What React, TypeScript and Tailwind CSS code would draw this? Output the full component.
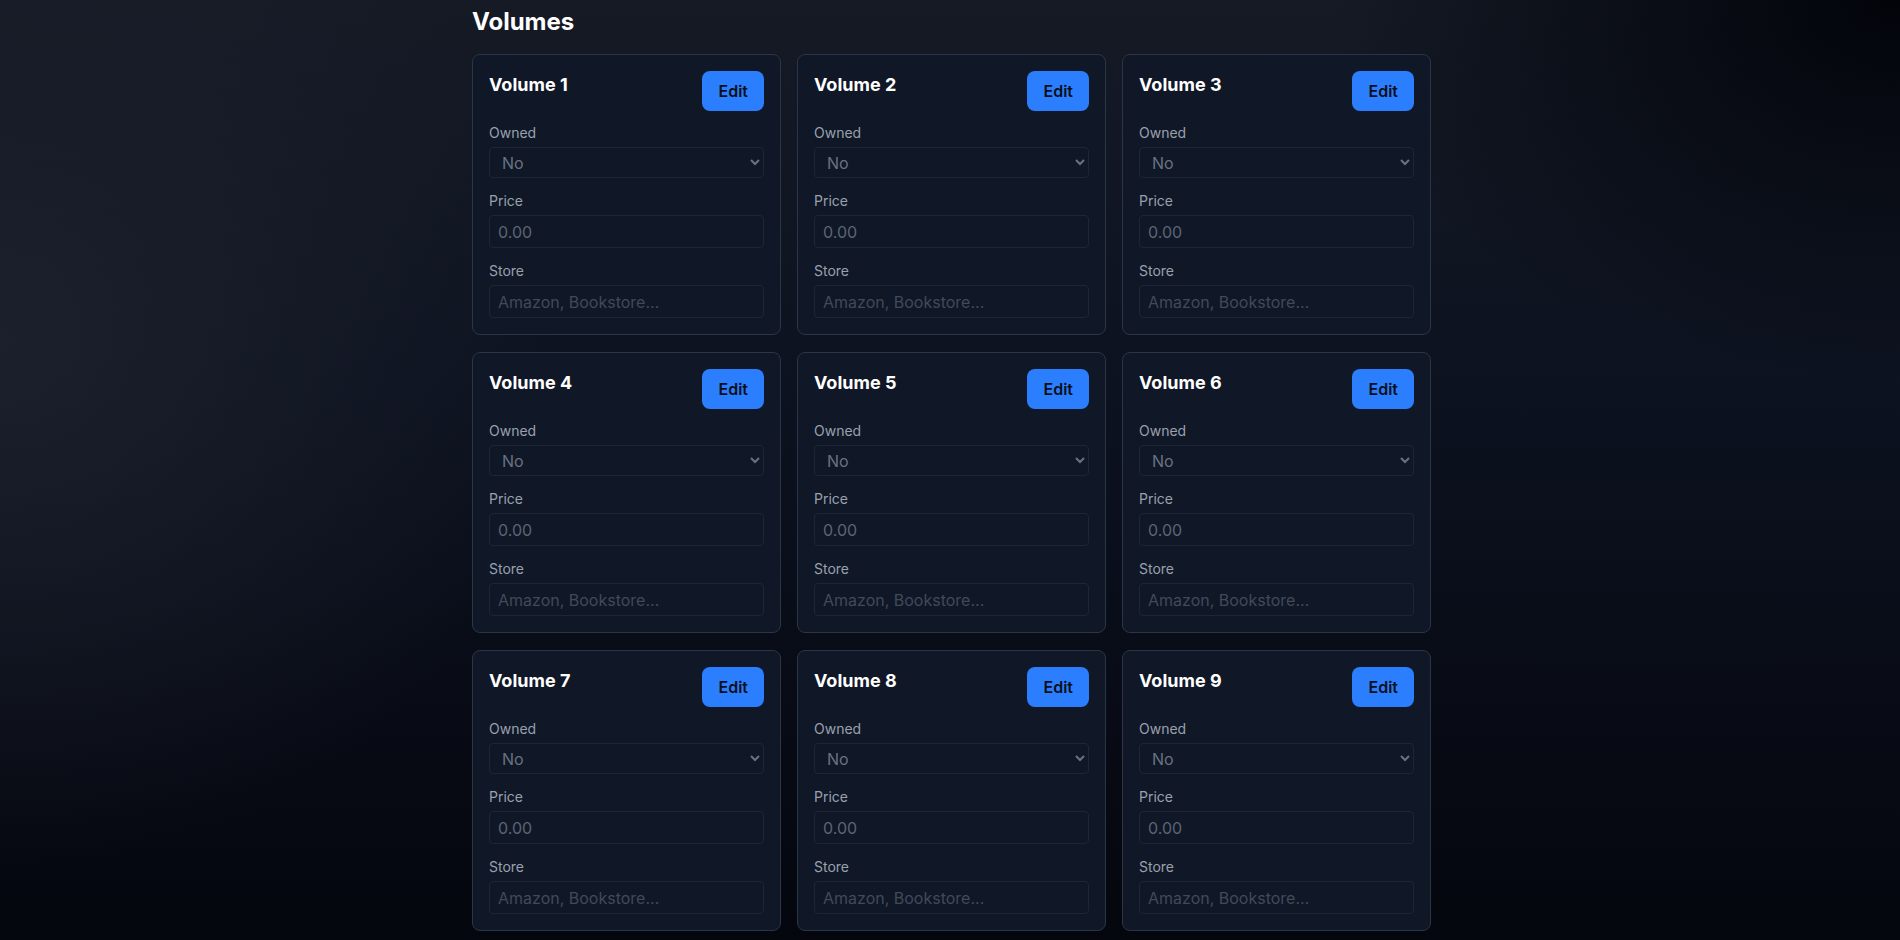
import { useState } from 'react';

type Volume = {
  id: number;
  owned: string;
  price: string;
  store: string;
};

const initialVolumes: Volume[] = Array.from({ length: 9 }, (_, i) => ({
  id: i + 1,
  owned: 'No',
  price: '',
  store: '',
}));

function VolumeCard({ volume, onChange }: { volume: Volume; onChange: (v: Volume) => void }) {
  return (
    <div className="rounded-lg border border-[#2b3545] bg-[#101726] p-4">
      <div className="flex items-start justify-between">
        <h3 className="text-lg leading-7 font-bold text-white">Volume {volume.id}</h3>
        <button className="h-10 rounded-lg bg-[#2b7fff] px-4 text-base font-semibold text-[#0b0f19]">Edit</button>
      </div>

      <div className="mt-3 flex flex-col gap-[13px]">
        <div>
          <label className="mb-1 block text-sm leading-5 text-gray-400">Owned</label>
          <select
            className="h-[31px] w-full rounded border border-[#1e2636] bg-[#101726] px-2 text-base text-gray-500"
            value={volume.owned}
            onChange={(e) => onChange({ ...volume, owned: e.target.value })}
          >
            <option>No</option>
            <option>Yes</option>
          </select>
        </div>

        <div>
          <label className="mb-1 block text-sm leading-5 text-gray-400">Price</label>
          <input
            className="h-[33px] w-full rounded border border-[#1e2636] bg-[#101726] px-2 text-base text-gray-300 placeholder:text-[#5d6575] outline-none"
            placeholder="0.00"
            value={volume.price}
            onChange={(e) => onChange({ ...volume, price: e.target.value })}
          />
        </div>

        <div>
          <label className="mb-1 block text-sm leading-5 text-gray-400">Store</label>
          <input
            className="h-[33px] w-full rounded border border-[#1e2636] bg-[#101726] px-2 text-base text-gray-300 placeholder:text-[#414a5a] outline-none"
            placeholder="Amazon, Bookstore..."
            value={volume.store}
            onChange={(e) => onChange({ ...volume, store: e.target.value })}
          />
        </div>
      </div>
    </div>
  );
}

export default function App() {
  const [volumes, setVolumes] = useState<Volume[]>(initialVolumes);

  const updateVolume = (v: Volume) => {
    setVolumes(volumes.map((old) => (old.id === v.id ? v : old)));
  };

  return (
    <div
      className="min-h-screen bg-[radial-gradient(ellipse_30%_55%_at_0%_35%,#1c202c_0%,transparent_100%),radial-gradient(ellipse_30%_40%_at_100%_0%,#02040a_0%,transparent_100%),linear-gradient(180deg,#151a25_0%,#0d1220_40%,#04060d_100%)] font-['Inter',sans-serif]"
    >
      <div className="mx-auto w-[962px] pt-[6px] pb-8 pl-[3px]">
        <h2 className="mb-4 text-2xl leading-8 font-bold text-white">Volumes</h2>
        <div className="grid grid-cols-3 gap-x-4 gap-y-[17px]">
          {volumes.map((v) => (
            <VolumeCard key={v.id} volume={v} onChange={updateVolume} />
          ))}
        </div>
      </div>
    </div>
  );
}
